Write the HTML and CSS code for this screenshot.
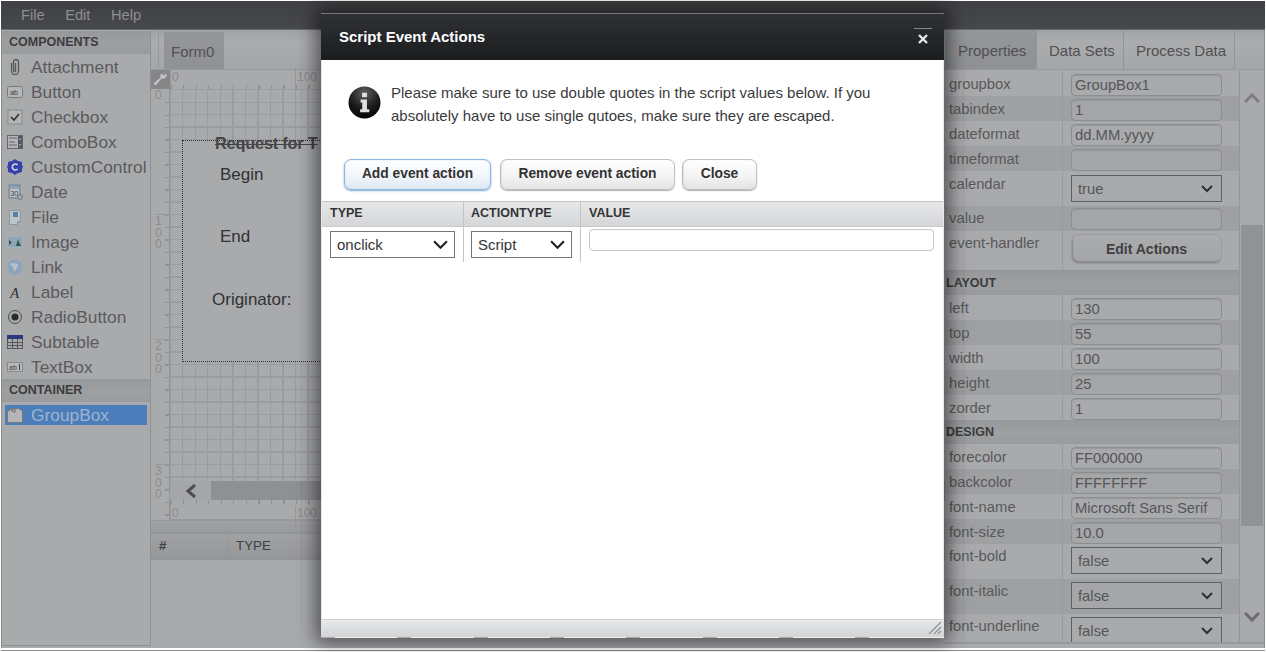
FILE: index.html
```html
<!DOCTYPE html>
<html lang="en">
<head>
<meta charset="utf-8">
<title>Form Designer</title>
<link rel="stylesheet" href="styles.css">
</head>
<body>
<div class="app">
  <nav class="topbar"><span>File</span><span>Edit</span><span>Help</span></nav>
  <div class="main">
    <i class="ghost ghost-a"></i>
    <i class="ghost ghost-b"></i>
    <aside class="sidebar">
      <h3 class="section">COMPONENTS</h3>
      <div class="item"><svg viewBox="0 0 16 16"><path d="M4.500 4v8a3.500 3.500 0 0 0 7 0V3a2.500 2.500 0 0 0-5 0v8.500a1 1 0 0 0 2 0V4" fill="none" stroke="#58595b" stroke-width="1.300"/></svg>Attachment</div>
      <div class="item"><svg viewBox="0 0 16 16"><rect x=".5" y="2.500" width="15" height="11" rx="2" fill="#b4b5b7" stroke="#77787a"/><text x="3.200" y="10.600" class="mini">ab</text></svg>Button</div>
      <div class="item"><svg viewBox="0 0 16 16"><rect x="1" y="1" width="14" height="14" fill="#b4b5b7" stroke="#88898b"/><path d="M4 8l3 3 5-6" fill="none" stroke="#2f3032" stroke-width="1.600"/></svg>Checkbox</div>
      <div class="item"><svg viewBox="0 0 16 16"><rect x=".5" y="1.500" width="15" height="13" fill="#b4b5b7" stroke="#66676a"/><path d="M2 4h8M2 8h6M2 11h8" stroke="#66676a"/><rect x="11" y="2" width="4" height="12" fill="#53585f"/><path d="M12 6l1-2 1 2zM12 10l1 2 1-2z" fill="#c5c7ca"/></svg>ComboBox</div>
      <div class="item"><svg viewBox="0 0 16 16"><path d="M8 0l2.500 1.800L15 3v3l1 2-1 2v3l-4.500 1.200L8 16l-2.500-1.800L1 13v-3L0 8l1-2V3l4.500-1.200z" fill="#3341a8"/><path d="M10.500 6A3 3 0 1 0 10.500 10" fill="none" stroke="#d5d6e0" stroke-width="1.600"/></svg>CustomControl</div>
      <div class="item"><svg viewBox="0 0 16 16"><rect x="2" y="1" width="11" height="13" fill="#8fa3b4" stroke="#6d8295"/><rect x="3" y="5" width="9" height="8" fill="#bcc1c5"/><text x="3.400" y="12" class="mini">30</text><circle cx="13" cy="13" r="2.500" fill="#a3a9ad" stroke="#6d7a85"/></svg>Date</div>
      <div class="item"><svg viewBox="0 0 16 16"><path d="M2.500 1.500h11v11h-3v3h-8z" fill="#bcc3c9" stroke="#8697a5"/><rect x="6" y="3" width="5" height="5" fill="#5a7fa3"/></svg>File</div>
      <div class="item"><svg viewBox="0 0 16 16"><rect x=".5" y="2.500" width="15" height="11" fill="#8ea4b8" stroke="#a3b0ba"/><path d="M2 11V6l3 2.500zM9 12l2-7 1 3 2 4z" fill="#2f5a4a"/></svg>Image</div>
      <div class="item"><svg viewBox="0 0 16 16"><circle cx="8" cy="8" r="7.500" fill="#8aa5bd"/><path d="M3 5c3-2 6 0 8 0l-1 4-3 4-1-5z" fill="#b9c2c9"/></svg>Link</div>
      <div class="item"><svg viewBox="0 0 16 16"><text x="3" y="14" class="serif-a">A</text></svg>Label</div>
      <div class="item"><svg viewBox="0 0 16 16"><circle cx="8" cy="8" r="6.500" fill="none" stroke="#4d4e50"/><circle cx="8" cy="8" r="3.500" fill="#2b2c2e"/></svg>RadioButton</div>
      <div class="item"><svg viewBox="0 0 16 16"><rect x=".5" y="1.500" width="15" height="13" fill="#a9aaac" stroke="#55575c"/><rect x="0" y="1" width="16" height="4" fill="#2c3a7d"/><path d="M5.500 5v10M10.500 5v10M0 8.500h16M0 11.500h16" stroke="#55575c"/></svg>Subtable</div>
      <div class="item"><svg viewBox="0 0 16 16"><rect x=".5" y="3.500" width="15" height="9" fill="#b8b9bb" stroke="#88898b"/><text x="2" y="10.500" class="mini">ab</text><path d="M12.500 5v6" stroke="#3a3b3d"/></svg>TextBox</div>
      <h3 class="section">CONTAINER</h3>
      <div class="item item-selected"><svg viewBox="0 0 16 16"><path d="M.5 3.500h2l1.500-2h8l2 2h1.500v12H.5z" fill="#b4b5b7" stroke="#77787a"/><text x="4" y="5" class="xy">xy</text></svg>GroupBox</div>
    </aside>

    <section class="center">
      <div class="tabbar tabbar-left"><span class="tab tab-active">Form0</span></div>
      <div class="designer">
        <div class="corner"><svg viewBox="0 0 18 18"><path d="M14.500 2.500a4 4 0 0 0-5 5L2.500 13.500l2 2 6-7a4 4 0 0 0 5-5l-2.500 2-2-1 .5-2z" fill="#c4c5c7"/></svg></div>
        <div class="ruler-top"><span>0</span><span class="r100">100</span></div>
        <div class="ruler-left">
          <span class="digits d0">0</span>
          <span class="digits d100">1<br>0<br>0</span>
          <span class="digits d200">2<br>0<br>0</span>
          <span class="digits d300">3<br>0<br>0</span>
        </div>
        <div class="canvas-col">
          <div class="canvas">
            <div class="groupbox"></div>
            <span class="form-title">Request for T</span>
            <span class="form-label l-begin">Begin</span>
            <span class="form-label l-end">End</span>
            <span class="form-label l-orig">Originator:</span>
          </div>
          <div class="hscroll"><div class="hscroll-btn"><svg viewBox="0 0 14 14"><path d="M11 1L4 7l7 6" fill="none" stroke="#4c4d4f" stroke-width="3"/></svg></div></div>
          <div class="ruler-top ruler-bottom"><span>0</span><span class="r100">100</span></div>
        </div>
      </div>
      <div class="splitter"></div>
      <div class="grid-head"><span class="col-num">#</span><span>TYPE</span></div>
    </section>

    <section class="props">
      <div class="tabbar tabbar-right"><span class="tab tab-active">Properties</span><span class="tab">Data Sets</span><span class="tab">Process Data</span></div>
      <div class="props-body">
        <div class="prop-table">
          <div class="row"><label>groupbox</label><div class="cell"><div class="input">GroupBox1</div></div></div>
          <div class="row alt"><label>tabindex</label><div class="cell"><div class="input">1</div></div></div>
          <div class="row"><label>dateformat</label><div class="cell"><div class="input">dd.MM.yyyy</div></div></div>
          <div class="row alt"><label>timeformat</label><div class="cell"><div class="input"></div></div></div>
          <div class="row row-sel row-cal"><label>calendar</label><div class="cell"><select class="sel-dim"><option>true</option></select></div></div>
          <div class="row alt row-val"><label>value</label><div class="cell"><div class="input"></div></div></div>
          <div class="row row-btn"><label>event-handler</label><div class="cell"><div class="edit-btn">Edit Actions</div></div></div>
          <h3 class="section section-prop">LAYOUT</h3>
          <div class="row"><label>left</label><div class="cell"><div class="input">130</div></div></div>
          <div class="row alt"><label>top</label><div class="cell"><div class="input">55</div></div></div>
          <div class="row"><label>width</label><div class="cell"><div class="input">100</div></div></div>
          <div class="row alt"><label>height</label><div class="cell"><div class="input">25</div></div></div>
          <div class="row"><label>zorder</label><div class="cell"><div class="input">1</div></div></div>
          <h3 class="section section-prop">DESIGN</h3>
          <div class="row"><label>forecolor</label><div class="cell"><div class="input">FF000000</div></div></div>
          <div class="row alt"><label>backcolor</label><div class="cell"><div class="input">FFFFFFFF</div></div></div>
          <div class="row"><label>font-name</label><div class="cell"><div class="input">Microsoft Sans Serif</div></div></div>
          <div class="row alt"><label>font-size</label><div class="cell"><div class="input">10.0</div></div></div>
          <div class="row row-sel"><label>font-bold</label><div class="cell"><select class="sel-dim"><option>false</option></select></div></div>
          <div class="row row-sel alt"><label>font-italic</label><div class="cell"><select class="sel-dim"><option>false</option></select></div></div>
          <div class="row row-sel"><label>font-underline</label><div class="cell"><select class="sel-dim"><option>false</option></select></div></div>
        </div>
        <div class="vscroll">
          <svg class="vs-arrow" viewBox="0 0 16 10"><path d="M1 9l7-7 7 7" fill="none" stroke="#7d7e80" stroke-width="3"/></svg>
          <div class="vs-thumb"></div>
          <svg class="vs-arrow" viewBox="0 0 16 10"><path d="M1 1l7 7 7-7" fill="none" stroke="#6b6c6e" stroke-width="3"/></svg>
        </div>
      </div>
    </section>
  </div>
  <div class="bottom-line"></div>

  <div class="modal">
    <header class="modal-head">
      <span class="modal-title">Script Event Actions</span>
      <span class="modal-close"><svg viewBox="0 0 10 10"><path d="M1 1l8 8M9 1l-8 8" stroke="#e6e7e8" stroke-width="2.400"/></svg></span>
    </header>
    <div class="modal-body">
      <div class="message">
        <svg class="info" viewBox="0 0 34 34">
          <defs><radialGradient id="ig" cx=".5" cy=".2" r=".85"><stop offset="0" stop-color="#606060"/><stop offset=".55" stop-color="#1c1c1c"/><stop offset="1" stop-color="#000"/></radialGradient></defs>
          <circle cx="17" cy="17" r="16.500" fill="url(#ig)"/>
          <rect x="14.500" y="7" width="5" height="4.500" fill="#e0e0e0"/>
          <path d="M13 14h6.500v10H22v3H12.500v-3h2.200v-7H13z" fill="#e0e0e0"/>
        </svg>
        <p>Please make sure to use double quotes in the script values below. If you absolutely have to use single qutoes, make sure they are escaped.</p>
      </div>
      <div class="actions">
        <button class="btn btn-focus">Add event action</button>
        <button class="btn btn-remove">Remove event action</button>
        <button class="btn btn-close">Close</button>
      </div>
      <div class="ev-table">
        <div class="ev-head"><span class="c1">TYPE</span><span class="c2">ACTIONTYPE</span><span class="c3">VALUE</span></div>
        <div class="ev-row">
          <div class="c1"><select class="sel-type"><option>onclick</option></select></div>
          <div class="c2"><select class="sel-action"><option>Script</option></select></div>
          <div class="c3"><div class="value-input"></div></div>
        </div>
      </div>
    </div>
    <footer class="modal-foot">
      <svg class="resizer" viewBox="0 0 14 14"><path d="M1 13L13 1M6 13l7-7M10 13l3-3" stroke="#8f9092" stroke-width="1.200"/></svg>
    </footer>
  </div>
</div>
</body>
</html>
```
FILE: styles.css
```css
* { box-sizing: border-box; }
html, body { margin: 0; height: 100%; overflow: hidden; background: #fff; }
body { font-family: "Liberation Sans", Arial, sans-serif; }

.app {
  position: relative;
  width: 1266px;
  height: 652px;
  padding: 1px 1px 0 1px;
  display: flex;
  flex-direction: column;
  background: #fff;
}

.topbar {
  flex: 0 0 29px;
  display: flex;
  align-items: center;
  gap: 20.5px;
  padding: 0 0 1px 20px;
  background: linear-gradient(#404144, #47484b);
  border-bottom: 1px solid #68696c;
  color: #8e8f91;
  font-size: 14.67px;
}

.main {
  position: relative;
  flex: 0 0 618px;
  display: flex;
  background: #a9aaac;
  border-left: 1px solid #8a8b8d;
  border-right: 1px solid #8a8b8d;
  overflow: hidden;
}
.bottom-line { flex: 0 0 3px; border-bottom: 1px solid #8f9092; }

.sidebar {
  flex: 0 0 149px;
  height: 616px;
  border-right: 1px solid #8f9092;
  border-bottom: 1px solid #8f9092;
  padding-top: 1px;
}

.section {
  margin: 0;
  height: 23px;
  padding: 0 0 0 7px;
  font-size: 12.5px;
  line-height: 22px;
  font-weight: bold;
  color: #3b3c3e;
  background: linear-gradient(#97989a, #9e9fa1 50%, #9a9b9d);
}

.item {
  height: 25px;
  display: flex;
  align-items: center;
  padding: 2px 0 0 5px;
  font-size: 17.33px;
  color: #5a5b5d;
  white-space: nowrap;
}
.item svg { flex: 0 0 16px; width: 16px; height: 16px; margin: -2px 8px 0 0; }
.item-selected {
  height: 20px;
  margin: 3px 3px 0 3px;
  padding: 0 0 0 2px;
  background: #4a7db9;
  color: #9fb4cf;
}
.item-selected svg { margin: 0 8px 0 0; }
.mini { font: 7px "Liberation Sans", sans-serif; fill: #3c3d3f; }
.xy { font: 5px "Liberation Sans", sans-serif; fill: #333; }
.serif-a { font: italic 15px "Liberation Serif", serif; fill: #2f3032; }

.center { flex: 0 0 794px; display: flex; flex-direction: column; min-width: 0; }

.tabbar {
  flex: 0 0 40px;
  height: 40px;
  display: flex;
  align-items: stretch;
  border-bottom: 1px solid #98999b;
  background: linear-gradient(#a1a2a4, #abacae 30%, #a5a6a8);
  color: #4f5052;
  font-size: 15px;
}
.tabbar-left { position: relative; padding: 2px 0 0 13px; }
.tabbar-left::before {
  content: "";
  position: absolute;
  left: 7px;
  top: 2px;
  bottom: 0;
  width: 1px;
  background: #98999b;
}
.tabbar-right { padding: 0; }
.tab {
  display: flex;
  align-items: center;
  padding: 2px 12px 0;
  border-right: 1px solid #939496;
  white-space: nowrap;
}
.tab-active { background: linear-gradient(#94969a, #8f9194); }
.tabbar-left .tab { padding: 2px 9px 0 7px; }
.tabbar-right .tab:nth-child(1) { width: 92px; padding-left: 13px; }
.tabbar-right .tab:nth-child(2) { width: 87px; }
.tabbar-right .tab:nth-child(3) { width: 111px; }

.designer {
  flex: 0 0 450px;
  display: grid;
  grid-template-columns: 19px 1fr;
  grid-template-rows: 19px 1fr;
}
.corner { background: #858688; }
.corner svg { display: block; width: 18px; height: 18px; }
.ruler-top {
  position: relative;
  font-size: 12px;
  color: #8b8c8e;
  border-left: 1px solid #97989a;
  background:
    repeating-linear-gradient(90deg, #8e8f91 0 1px, transparent 1px 12.5px) 0 100% / 100% 4px no-repeat;
}
.ruler-top span { position: absolute; left: 1px; top: 0; line-height: 14px; }
.ruler-top .r100 { left: 124px; padding-left: 1px; border-left: 1px solid #97989a; height: 19px; }
.ruler-bottom {
  flex: 0 0 20px;
  background:
    repeating-linear-gradient(90deg, #8e8f91 0 1px, transparent 1px 12.5px) 0 0 / 100% 4px no-repeat;
  border-bottom: 1px solid #98999b;
}
.ruler-bottom span { top: 6px; }
.ruler-left {
  position: relative;
  border-right: 1px solid #949597;
  background:
    repeating-linear-gradient(#909193 0 1px, transparent 1px 12.5px) 100% 12.5px / 4px 100% no-repeat;
}
.digits {
  position: absolute;
  left: 4px;
  width: 15px;
  padding-top: 1px;
  border-top: 1px solid #97989a;
  font-size: 12px;
  line-height: 11.500px;
  color: #8b8c8e;
}
.d0 { top: 0; border-top: 0; }
.d100 { top: 125px; }
.d200 { top: 250px; }
.d300 { top: 375px; }
.canvas-col { display: flex; flex-direction: column; min-width: 0; }
.canvas {
  position: relative;
  flex: 1;
  overflow: hidden;
  background:
    repeating-linear-gradient(90deg, #9b9c9e 0 1px, transparent 1px 12.5px),
    repeating-linear-gradient(#9b9c9e 0 1px, transparent 1px 12.5px);
}
.groupbox {
  position: absolute;
  left: 12px;
  top: 51px;
  width: 800px;
  height: 222px;
  border: 1px dotted #2f3032;
  background: #a9aaac;
}
.form-title, .form-label { position: absolute; white-space: nowrap; font-size: 17px; color: #303134; }
.form-title { left: 45px; top: 45px; font-size: 16.33px; font-weight: bold; color: #444547; letter-spacing: -.2px; text-decoration: line-through; text-decoration-thickness: 1px; }
.l-begin { left: 50px; top: 76px; }
.l-end { left: 50px; top: 138px; }
.l-orig { left: 42px; top: 201px; }

.hscroll { flex: 0 0 19px; display: flex; background: #8f9092; }
.hscroll-btn { flex: 0 0 41px; display: flex; align-items: center; justify-content: center; background: #a5a6a8; }
.hscroll-btn svg { width: 14px; height: 14px; }

.splitter {
  flex: 0 0 14px;
  border-top: 1px solid #98999b;
  border-bottom: 2px solid #949597;
  background: linear-gradient(#a0a1a3, #9a9b9d);
}
.grid-head {
  flex: 0 0 26px;
  height: 26px;
  display: flex;
  padding-left: 8px;
  background: linear-gradient(#a0a1a3, #96979a);
  border-bottom: 1px solid #929395;
  font-size: 13.33px;
  line-height: 24px;
  color: #3e3f41;
}
.col-num { width: 69px; margin-right: 8px; border-right: 1px solid #949597; font-weight: bold; }

.props { flex: 1; min-width: 0; display: flex; flex-direction: column; }
.props-body { flex: 0 0 574px; display: flex; min-height: 0; overflow: hidden; border-bottom: 2px solid #98999b; padding-top: 1px; }
.prop-table { flex: 0 0 295px; border-right: 1px solid #949597; }
.row {
  height: 25px;
  display: flex;
  font-size: 14.8px;
  color: #58595b;
}
.row label { flex: 0 0 118px; padding: 4px 0 0 4px; line-height: 19px; border-right: 1px solid #9a9b9d; }
.alt { background: #9fa0a2; }
.row-sel { height: 35px; }
.row-sel label { padding-top: 3px; }
.row-cal label { padding-top: 4px; }
.row-val label { padding-top: 3px; }
.row-btn { height: 40px; border-bottom: 1px solid #949597; }
.row-btn label { padding-top: 3px; }
.cell { flex: 1; padding: 3px 0 0 8px; }
.row-sel .cell { padding-top: 2px; }
.row-cal .cell { padding-top: 3px; }
.row-val .cell { padding-top: 2px; }
.row-btn .cell { padding-top: 3px; }
.input {
  width: 151px;
  height: 22px;
  padding: 0 3px;
  line-height: 20px;
  border: 1px solid #8c8d8f;
  border-radius: 4px;
  box-shadow: inset 0 1px 1px #98999b;
  background: #a9aaac;
  color: #55565a;
  white-space: nowrap;
  overflow: hidden;
}
.alt .input { background: #a5a6a8; }
select {
  appearance: none;
  -webkit-appearance: none;
  display: block;
  font: inherit;
  border-radius: 0;
  background-repeat: no-repeat;
  outline: none;
}
.sel-dim {
  width: 151px;
  height: 27px;
  margin-top: 1px;
  padding: 0 0 0 6px;
  border: 1px solid #5e5f61;
  color: #55565a;
  background-color: #a9aaac;
  background-position: right 8px center;
  background-size: 12px 8px;
  background-image: url("data:image/svg+xml,%3Csvg xmlns='http://www.w3.org/2000/svg' viewBox='0 0 12 8'%3E%3Cpath d='M1 1l5 5 5-5' fill='none' stroke='%232f3032' stroke-width='2'/%3E%3C/svg%3E");
}
.alt .sel-dim { background-color: #a5a6a8; }
.edit-btn {
  width: 151px;
  height: 30px;
  border-radius: 7px;
  text-align: center;
  font-size: 14px;
  font-weight: bold;
  line-height: 29px;
  color: #3f4042;
  background: linear-gradient(#aaabad, #a5a6a8);
  border: 1px solid #9a9b9d;
  box-shadow: inset 1px -2px 1px #8a8b8d;
}
.section-prop { height: 24px; margin: 0; padding-left: 1px; line-height: 25px; }
.vscroll { flex: 1; display: flex; flex-direction: column; align-items: center; position: relative; }
.vs-arrow { position: absolute; width: 16px; height: 10px; }
.vs-arrow:first-child { top: 22px; }
.vs-arrow:last-child { top: 541px; }
.vs-thumb { position: absolute; left: 1px; right: 1px; top: 154px; height: 301px; background: #919294; }

.ghost { position: absolute; width: 1px; background: rgba(0, 0, 0, .05); }
.ghost-a { left: 299px; top: 5px; height: 590px; }
.ghost-b { left: 961px; top: 40px; height: 575px; }

.modal {
  position: absolute;
  left: 321px;
  top: 13px;
  width: 623px;
  height: 625px;
  display: flex;
  flex-direction: column;
  box-shadow: 0 0 18px 5px rgba(0, 0, 0, .55);
  background: #fff;
}
.modal-head {
  flex: 0 0 47px;
  position: relative;
  display: flex;
  align-items: center;
  padding: 0 0 1px 18px;
  background: linear-gradient(#2f3134, #1a1c1e);
  border-top: 1px solid #75777a;
}
.modal-title { color: #fff; font-size: 15px; font-weight: bold; }
.modal-close {
  position: absolute;
  right: 12px;
  top: 14px;
  width: 18px;
  height: 18px;
  border-top: 1px solid #85878a;
  display: flex;
  justify-content: center;
  padding-top: 5px;
}
.modal-close svg { width: 10px; height: 10px; }
.modal-body { flex: 1; min-height: 0; border-left: 1px solid #e8e8e8; border-right: 1px solid #e8e8e8; }
.message { display: flex; padding: 21px 0 0 26px; height: 99px; }
.info { flex: 0 0 33px; width: 33px; height: 33px; margin: 5px 10px 0 0; }
.message p { margin: 0; width: 510px; font-size: 15px; line-height: 23px; color: #3a3a3c; }
.actions { display: flex; padding-left: 22px; height: 42px; }
.btn {
  height: 31px;
  padding: 0 0 3px;
  margin: 0;
  font: bold 13.8px "Liberation Sans", Arial, sans-serif;
  color: #333;
  border: 1px solid #c0c0c0;
  border-radius: 7px;
  background: linear-gradient(#fff, #f4f4f4 55%, #e4e4e4);
  box-shadow: 0 1px 1px #b0b0b0, inset 1px 0 1px #ddd;
}
.btn-focus { width: 147px; margin-right: 9px; border-color: #8fb6dc; background: linear-gradient(#fff, #f2f6fb 55%, #dfe8f2); box-shadow: 0 1px 2px #7da8d4, inset 0 0 2px #c8dcf0; }
.btn-remove { width: 175px; margin-right: 7px; }
.btn-close { width: 75px; }
.ev-table { width: 100%; }
.ev-head {
  display: flex;
  height: 26px;
  border-top: 1px solid #c3c4c6;
  border-bottom: 1px solid #c8c9cb;
  background: linear-gradient(#e6e7e9, #d5d6d8);
  font-size: 12.5px;
  font-weight: bold;
  line-height: 23px;
  color: #333436;
}
.c1 { flex: 0 0 142px; padding-left: 8px; border-right: 1px solid #c3c4c6; }
.c2 { flex: 0 0 117px; padding-left: 7px; border-right: 1px solid #c3c4c6; }
.c3 { flex: 1; padding-left: 8px; }
.ev-row { display: flex; height: 35px; }
.ev-row .c3 { padding-top: 2px; }
.ev-row .c1, .ev-row .c2 { padding-top: 4px; }
.sel-type, .sel-action {
  height: 27px;
  padding: 0 0 0 6px;
  font-size: 15px;
  border: 1px solid #767676;
  color: #333;
  background-color: #fff;
  background-position: right 6px center;
  background-size: 15px 10px;
  background-image: url("data:image/svg+xml,%3Csvg xmlns='http://www.w3.org/2000/svg' viewBox='0 0 14 9'%3E%3Cpath d='M1 1l6 6 6-6' fill='none' stroke='%23222' stroke-width='2'/%3E%3C/svg%3E");
}
.sel-type { width: 125px; }
.sel-action { width: 101px; }
.value-input {
  width: 345px;
  height: 22px;
  border: 1px solid #c4c4c4;
  border-radius: 4px;
  background: #fff;
}
.modal-foot {
  flex: 0 0 19px;
  position: relative;
  border-top: 1px solid #d0d1d3;
  border-bottom: 1px solid #f0f0f0;
  background: linear-gradient(#e8e9ea, #d2d3d5);
}
.modal-foot::after {
  content: "";
  position: absolute;
  left: 0;
  right: 20px;
  bottom: -1px;
  height: 1px;
  background: repeating-linear-gradient(90deg, #a8a9ab 0 14px, transparent 14px 76.3px);
}
.resizer { position: absolute; right: 2px; bottom: 2px; width: 14px; height: 14px; }
```
